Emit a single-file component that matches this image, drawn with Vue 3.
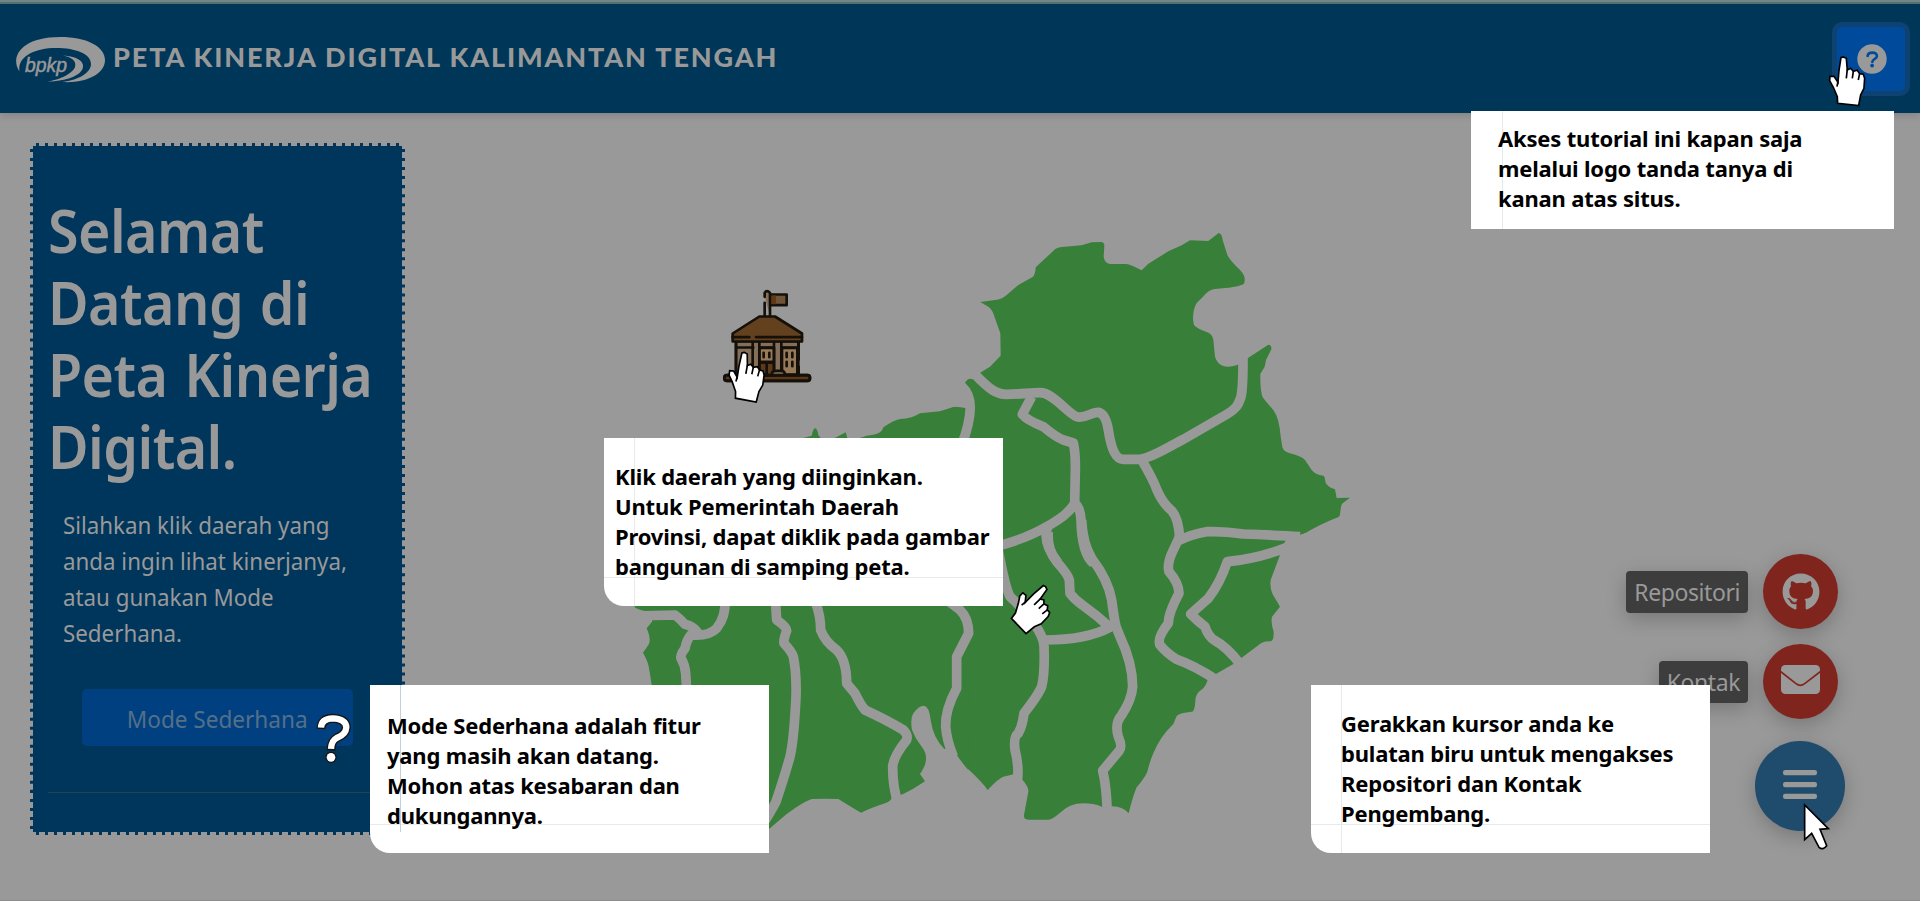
<script setup>
const callouts = [
  { id: 'help', lines: ['Akses tutorial ini kapan saja', 'melalui logo tanda tanya di', 'kanan atas situs.'] },
  { id: 'region', lines: ['Klik daerah yang diinginkan.', 'Untuk Pemerintah Daerah', 'Provinsi, dapat diklik pada gambar', 'bangunan di samping peta.'] },
  { id: 'mode', lines: ['Mode Sederhana adalah fitur', 'yang masih akan datang.', 'Mohon atas kesabaran dan', 'dukungannya.'] },
  { id: 'contact', lines: ['Gerakkan kursor anda ke', 'bulatan biru untuk mengakses', 'Repositori dan Kontak', 'Pengembang.'] },
]
const hands = [
  'translate(1843.3 57.3) scale(.3333)',
  'translate(744.3 352.7) rotate(4) scale(.3333)',
  'translate(1045.3 586.8) rotate(40) scale(.3333)',
]
</script>

<template>
  <div class="page">
    <header class="topbar">
      <svg class="logo" width="92" height="48" viewBox="14 36 92 48">
        <path d="M19.500 71.500C10 58 20 37 60 37C88 37 105 47 105 60C105 74 86 83.500 62 82C80 80 91 72 91 64C91 54 76 48 56 48C34 48 17 57 19.500 71.500Z" />
        <path d="M63 55.500C76 56 84 61 83 67C82 75 67 81.500 47 81.500C60 80 73 73 75 67C77 61 71 57 63 55.500Z" />
        <text x="25" y="72" textLength="42" lengthAdjust="spacingAndGlyphs">bpkp</text>
      </svg>
      <h2 class="title">PETA KINERJA DIGITAL KALIMANTAN TENGAH</h2>
      <button class="help" aria-label="Bantuan">
        <svg width="30" height="30" viewBox="-15 -15 30 30">
          <circle r="14.700" />
          <path d="M-4.300-3C-4.200-5.500-2.500-6.400 .4-6.400S4.900-5.200 4.900-2.800C4.900-.3 .3 .3 .3 3" />
          <circle class="dot" cx=".1" cy="6.600" r="1.900" />
        </svg>
      </button>
    </header>

    <main class="stage">
      <aside class="panel">
        <h1>Selamat<br>Datang di<br>Peta Kinerja<br>Digital.</h1>
        <p>Silahkan klik daerah yang<br>anda ingin lihat kinerjanya,<br>atau gunakan Mode<br>Sederhana.</p>
        <button class="mode"><span>Mode Sederhana</span></button>
        <hr>
      </aside>

      <svg class="map" width="780" height="640" viewBox="600 200 780 640">
        <g class="land">
          <path transform="translate(940 210) scale(.33333)" d="M123 487L150 470L182 437L181 370L165 325Q158 298 145 290L121 276L165 270Q185 268 200 255L235 225L278 201Q286 195 287 172L300 160L345 118Q352 112 365 111L425 106L455 97L485 96Q494 98 493 110L491 140Q494 160 510 162L560 162Q575 165 605 181L625 161L685 124L725 106L750 91L805 93L836 69Q846 72 848 90L862 135Q868 148 890 170Q913 190 914 205Q915 220 910 223Q890 233 825 237Q805 238 785 265Q768 278 764 292Q755 320 762 345Q770 356 800 366Q818 372 820 390L825 440Q832 462 850 468Q865 473 892 465L925 443L985 404Q996 405 994 418L978 450L974 470L961 492Q960 540 968 562Q975 572 1000 600Q1018 625 1022 680L1027 712Q1030 724 1045 728Q1085 738 1095 750L1115 780Q1125 794 1150 797Q1155 800 1156 815Q1160 830 1185 838L1190 864L1230 863L1208 880Q1202 885 1200 915L1196 921Q1150 938 1100 967L1037 990L960 1060L0 1060L0 604L40 591L75 594L105 590Q105 545 75 518Q85 502 97 508Z" />
          <path transform="translate(960 520) scale(.33333)" d="M-20 0L1040 0L1040 37L977 60L960 105L932 180Q928 210 945 235L960 260L936 290Q932 310 941 335Q942 362 932 364Q915 362 903 370L844 414L820 432L769 461L743 480Q735 505 720 512Q705 525 706 545Q704 575 695 575Q660 578 650 588L640 612Q600 650 580 700Q570 722 562 755Q555 772 530 802Q518 830 506 880Q490 860 457 859L425 860Q400 850 370 850Q330 850 300 878Q275 900 265 899L205 899Q190 898 192 885L205 815Q207 800 183 775L160 762Q158 764 130 770Q115 775 83 810Q65 785 25 748Q-5 710 -20 680Z" />
          <path transform="translate(620 580) scale(.33333)" d="M1045 570Q1010 530 1000 505L973 507Q940 475 932 420Q928 380 912 377Q895 378 880 400Q870 415 876 450Q885 475 905 500Q922 520 917 545Q915 560 900 582L915 604Q880 628 848 643L815 652Q815 662 795 670Q750 685 723 698Q700 685 655 657Q615 655 575 657Q550 665 500 702L447 747L300 747L300 400L96 320L88 270Q85 245 69 218L85 195Q95 180 80 145L96 125L96 95Q60 94 44 82L44 -60L1050 -60Z" />
          <path transform="translate(600 370) scale(.33333)" d="M600 220L610 204L635 197Q640 172 647 175Q652 178 655 195L662 204L700 206L737 187L742 204L780 204L800 197Q845 195 850 172Q880 150 905 146Q930 148 960 130L1035 122L1065 110L1095 114L1095 220Z" />
        </g>
        <g class="border">
          <g transform="translate(940 210) scale(.33333)">
            <path d="M102 490C150 540 170 553 200 553C240 553 270 548 300 548C340 548 380 608 410 620C435 628 455 605 475 607C490 610 500 630 505 660C515 725 530 748 550 748L600 748C640 742 690 708 730 688L860 613C890 595 895 585 903 560C910 530 909 480 909 425" />
            <path d="M275 560L247 613Q260 630 310 650Q345 680 370 690L400 699Q407 730 406 780L404 880Q385 915 320 950Q260 985 180 1006" />
            <path d="M404 880Q422 895 423 930Q425 1030 460 1060M325 945C305 990 335 1035 355 1060" />
            <path d="M91 590Q90 640 65 705M608 755Q640 810 650 838Q668 880 695 902Q716 925 719 985" />
          </g>
          <g transform="translate(960 520) scale(.33333)">
            <path d="M365 0Q368 70 395 115Q445 180 455 240Q463 300 468 320L480 350Q518 430 518 500Q515 540 485 585Q463 610 475 650Q488 680 478 692L428 752Q440 800 442 885" />
            <path d="M265 35Q260 85 290 125Q325 165 328 180L330 220Q345 240 370 257Q410 285 450 322Q380 360 255 360M115 90Q135 200 150 230Q190 265 235 330Q252 360 252 380Q255 460 245 500Q235 525 192 580Q188 615 175 640Q160 650 165 690Q178 740 172 785" />
            <path d="M659 50L640 90Q620 130 627 155Q657 190 657 220Q625 280 625 310Q590 355 600 375Q620 400 650 418Q700 435 770 480M655 62Q690 44 740 35Q790 33 850 42Q960 46 1020 50" />
            <path d="M985 80Q900 115 802 125Q780 190 745 235L692 282Q715 305 735 320Q745 350 765 362Q800 380 842 434" />
          </g>
          <g transform="translate(620 580) scale(.33333)">
            <path d="M40 108L165 105Q182 118 195 133Q220 138 235 160M315 60Q318 110 290 145Q265 170 212 165Q200 180 195 205Q180 225 183 235Q195 255 197 280L200 330" />
            <path d="M467 70L470 120Q500 140 500 152Q490 180 492 190Q515 215 520 230Q530 280 528 350Q522 480 510 530Q495 585 468 665Q455 690 430 730" />
            <path d="M588 70Q602 110 602 150Q615 185 650 210Q680 240 680 310L705 340Q722 375 735 390Q800 420 850 450Q865 465 860 480Q820 530 818 560Q818 620 833 665" />
            <path d="M980 60L1020 90Q1046 115 1046 160L1010 230L1010 325Q975 390 977 440Q980 480 1000 530" />
          </g>
        </g>
        <g class="building" transform="translate(700 269.500) scale(.33333)">
          <rect x="73" y="317" width="257" height="17" rx="8" fill="#5b3817" />
          <rect x="108" y="215" width="187" height="102" fill="#84705a" />
          <rect x="178" y="235" width="44" height="42" fill="#977b59" />
          <rect x="178" y="279" width="44" height="38" fill="#5d3b1a" />
          <rect x="246" y="235" width="46" height="80" fill="#977b59" />
          <path d="M200 279V317M178 215V317M222 215V300M244 215V300M112 234H160M178 234H222M246 234H295M178 279H222" />
          <path d="M108 217V317M296 217V270M296 292V317M158 217V317" />
          <path d="M98 192L178 141H225L306 192V216H98Z" fill="#64411e" />
          <path d="M98 203H148M168 203H306" />
          <path d="M194 139V100M194 82V70Q200 60 210 70V139" fill="#84705a" />
          <path d="M211 75H260V107H211Z" fill="#715438" /><path d="M214 78H228V104H214Z" fill="#603a18" stroke="none" />
          <path d="M191 250V263M208 250V263M260 250V263M277 250V263M260 277V290M277 277V290" />
          <path d="M216 315V310Q218 304 228 304H244Q254 304 255 315" fill="#84705a" />
          <rect x="73" y="317" width="257" height="17" rx="8" fill="none" />
        </g>
      </svg>
    </main>

    <nav class="fab">
      <div class="fab-row"><span>Repositori</span>
        <a class="round"><svg width="38" height="38" viewBox="0 0 496 512"><path d="M165.900 397.400c0 2-2.300 3.600-5.200 3.600-3.300.3-5.600-1.300-5.600-3.600 0-2 2.300-3.600 5.200-3.600 3-.3 5.600 1.300 5.600 3.600zm-31.100-4.500c-.7 2 1.300 4.300 4.300 4.900 2.600 1 5.600 0 6.200-2s-1.300-4.300-4.300-5.200c-2.600-.7-5.500.3-6.200 2.300zm44.200-1.700c-2.900.7-4.900 2.600-4.600 4.900.3 2 2.900 3.300 5.900 2.600 2.900-.7 4.900-2.600 4.600-4.600-.3-1.900-3-3.200-5.900-2.900zM244.800 8C106.100 8 0 113.300 0 252c0 110.900 69.800 205.800 169.500 239.200 12.800 2.300 17.300-5.600 17.300-12.100 0-6.200-.3-40.400-.3-61.400 0 0-70 15-84.700-29.800 0 0-11.400-29.100-27.800-36.600 0 0-22.900-15.700 1.600-15.400 0 0 24.900 2 38.600 25.800 21.900 38.600 58.600 27.500 72.900 20.900 2.300-16 8.800-27.100 16-33.700-55.900-6.200-112.300-14.300-112.300-110.500 0-27.500 7.600-41.300 23.600-58.900-2.600-6.500-11.100-33.300 2.600-67.900 20.900-6.500 69 27 69 27 20-5.600 41.500-8.500 62.800-8.500s42.800 2.900 62.800 8.500c0 0 48.100-33.600 69-27 13.700 34.700 5.200 61.400 2.600 67.900 16 17.700 25.800 31.500 25.800 58.900 0 96.500-58.900 104.200-114.800 110.500 9.200 7.900 17 22.900 17 46.400 0 33.700-.3 75.400-.3 83.600 0 6.500 4.600 14.400 17.300 12.100C428.200 457.800 496 362.900 496 252 496 113.300 383.500 8 244.800 8z" /></svg></a>
      </div>
      <div class="fab-row"><span>Kontak</span>
        <a class="round"><svg class="mail" width="39" height="29" viewBox="0 0 117 87"><rect width="117" height="87" rx="13" /><path d="M-2 19L45 56Q58 66 71 56L119 19" /></svg></a>
      </div>
      <a class="round big"><svg width="34" height="29" viewBox="0 0 34 29"><rect width="34" height="5.300" rx="2.200" /><rect y="11.900" width="34" height="5.300" rx="2.200" /><rect y="23.700" width="34" height="5.300" rx="2.200" /></svg></a>
    </nav>

    <section v-for="c in callouts" :key="c.id" class="callout" :class="'callout-' + c.id">
      <div v-for="l in c.lines" :key="l">{{ l }}</div>
    </section>

    <svg class="pointers" width="1920" height="901" viewBox="0 0 1920 901">
      <g v-for="h in hands" :key="h" class="hand" :transform="h">
        <path d="M-7 1L0-1L9 3L12 38L22 33L30 42L42 39L49 49L60 51L64 63L62 93L52 113L46 145L-17 138L-18 118L-30 90L-41 70L-40 57L-28 57L-16 75L-13 40Z" />
        <path d="M12 36L9 63M30 42L27 63M49 49L45 68M-16 72L-19 88" />
      </g>
      <path class="arrow" transform="translate(1600 540) scale(.33333)" d="M614 795V899L635 880L657 922Q669 932 680 917L660 868L685 866Z" />
      <g transform="translate(0 490) scale(.33333)">
        <path class="q-out" d="M963 717Q964 686 998 685Q1038 687 1039 712Q1038 733 1010 744Q994 752 993 781" />
        <circle cx="993" cy="802" r="17" fill="#151515" />
        <path class="q-in" d="M963 713Q964 686 998 685Q1038 687 1039 712Q1038 733 1010 744Q994 752 993 777" />
        <circle cx="993" cy="802" r="13" fill="#fff" />
      </g>
    </svg>
  </div>
</template>

<style>
body { margin: 0; background: #999; }
</style>

<style scoped>
* { box-sizing: border-box; }
.page { position: relative; width: 1920px; height: 901px; overflow: hidden; background: #999; border-bottom: 1px solid #8c8c8c; font-family: "Noto Sans", sans-serif; }
.topbar { display: flex; align-items: center; height: 113px; padding: 4px 15px 0 14px; background: linear-gradient(#6f8787 2px, #55706f 2px, #55706f 4px, #003658 4px); box-shadow: 0 2px 8px rgba(0, 0, 0, .16); }
.logo { fill: #999; margin-top: 2px; }
.logo text { font: italic 20px "Liberation Sans", sans-serif; stroke: #999; stroke-width: .5; }
.title { margin: -3px 0 0 7px; color: #999; font: 900 27px/36px Lato, sans-serif; letter-spacing: 1.860px; white-space: nowrap; }
.help { display: flex; align-items: center; justify-content: center; width: 68px; height: 64px; margin: 1px 0 0 auto; padding: 0 0 0 1px; border: 0; border-radius: 5px; background: #004a9c; box-shadow: 0 0 0 5px #0e4273; }
.help circle { fill: #999; }
.help path { fill: none; stroke: #004a9c; stroke-width: 2.600; stroke-linecap: round; }
.help .dot { fill: #004a9c; }
.stage { display: flex; padding: 30px 0 0 30px; }
.panel { width: 375px; height: 692px; padding: 48px 15px 0; border: 3px dashed #999; background: #00365c; color: #999; }
.panel h1 { margin: 0; font-size: 59px; font-weight: 600; line-height: 72px; letter-spacing: -.6px; word-spacing: 3px; white-space: nowrap; transform: scaleX(.942); transform-origin: 0 0; }
.panel p { margin: 25px 0 0 15px; font-size: 24px; line-height: 36px; white-space: nowrap; transform: scaleX(.93); transform-origin: 0 0; }
.mode { display: block; width: 271px; height: 57px; margin: 38px 0 0 34px; padding: 1px 0 0; border: 0; border-radius: 5px; background: #004080; color: #546f88; font: 24px/57px "Noto Sans", sans-serif; white-space: nowrap; }
.mode span { display: inline-block; transform: scaleX(.94); }
.panel hr { margin: 46px 0 0; border: 0; border-top: 1px solid #26414f; }
.map { margin: 57px 0 0 195px; flex: none; }
.land { fill: #387f3a; }
.border { fill: none; stroke: #999; stroke-width: 29; stroke-linejoin: round; }
.building { stroke: #15100a; stroke-width: 8; stroke-linejoin: round; stroke-linecap: round; fill: none; }
.fab { position: absolute; top: 554px; right: 75px; display: flex; flex-direction: column; align-items: flex-end; gap: 15px; }
.fab-row { display: flex; align-items: center; gap: 15px; margin-right: 7px; }
.fab-row span { height: 42px; padding: 0 8px; border-radius: 4px; background: #3d3d3d; color: #999; font-size: 23px; line-height: 42px; letter-spacing: -.42px; box-shadow: 0 6px 20px rgba(0, 0, 0, .22); }
.round { display: flex; align-items: center; justify-content: center; width: 75px; height: 75px; border-radius: 50%; background: #7f251d; box-shadow: 0 6px 20px rgba(0, 0, 0, .22); }
.round svg { fill: #999; }
.round .mail { margin-top: -4px; }
.mail path { fill: none; stroke: #7f251d; stroke-width: 5; }
.big { width: 90px; height: 90px; margin-top: 7px; background: #1f4b6d; }
.big svg { margin-top: -4px; }
.callout { position: absolute; width: 399px; height: 168px; border-radius: 0 0 0 20px; color: #000; font-size: 22px; font-weight: 700; line-height: 30px; letter-spacing: -.19px; white-space: nowrap;
  background: linear-gradient(#e6eae8, #e6eae8) 30px 0 / 1px 100% no-repeat, linear-gradient(#e6eae8, #e6eae8) 0 139px / 100% 1px no-repeat, #fff; }
.callout-help { left: 1471px; top: 111px; width: 423px; height: 118px; padding: 12px 0 0 27px; border-radius: 0;
  background: linear-gradient(#e6eae8, #e6eae8) 31px 0 / 1px 100% no-repeat, #fff; }
.callout-region { left: 604px; top: 438px; padding: 23px 0 0 11px; }
.callout-mode { left: 370px; top: 685px; padding: 25px 0 0 17px;
  background: linear-gradient(#c0d0dc, #c0d0dc) 30px 0 / 1px 147px no-repeat, linear-gradient(#e6eae8, #e6eae8) 0 139px / 100% 1px no-repeat, #fff; }
.callout-contact { left: 1311px; top: 685px; padding: 23px 0 0 30px; }
.pointers { position: absolute; inset: 0; }
.hand path, .arrow { fill: #fff; stroke: #000; stroke-width: 5; stroke-linejoin: miter; }
.q-out, .q-in { fill: none; stroke-width: 27; stroke: #151515; stroke-linecap: butt; }
.q-in { stroke: #fff; stroke-width: 19; }
</style>
